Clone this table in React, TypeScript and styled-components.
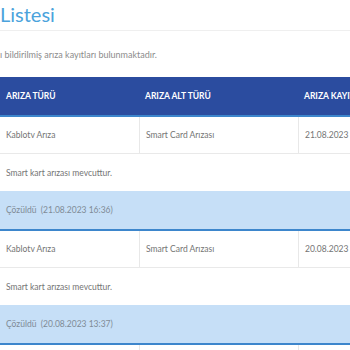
import React from "react";
import styled, { createGlobalStyle } from "styled-components";

const Global = createGlobalStyle`
  html, body { margin: 0; padding: 0; background: #fff; }
  body { font-family: Lato, "Open Sans", sans-serif; overflow: hidden; }
`;

const Page = styled.div`
  width: 350px;
  height: 350px;
  overflow: hidden;
  background: #fff;
`;

const TitleBar = styled.div`
  height: 30px;
  border-bottom: 1px solid #efefef;
  display: flex;
  align-items: center;
`;

const Title = styled.h1`
  margin: -2px 0 0;
  font-size: 20px;
  font-weight: 400;
  color: #4ba3dc;
  line-height: 1;
`;

const Subtitle = styled.p`
  margin: 0;
  height: 46px;
  display: flex;
  align-items: center;
  font-size: 9px;
  color: #8c8c8c;
`;

const Table = styled.div`
  width: 460px;
`;

const Grid = styled.div`
  display: grid;
  grid-template-columns: 139px 159px 1fr;
`;

const Head = styled(Grid)`
  background: #2b4c9f;
  height: 38px;
  border-bottom: 2px solid #3d86cc;
`;

const HeadCell = styled.div`
  display: flex;
  align-items: center;
  padding-left: 6px;
  font-size: 8.5px;
  font-weight: 700;
  color: #fff;
  white-space: nowrap;
`;

const Row = styled(Grid)`
  height: 36px;
  border-bottom: 1px solid #e9e9e9;
`;

const Cell = styled.div<{ $divider?: boolean }>`
  display: flex;
  align-items: center;
  padding-left: 6px;
  font-size: 8.5px;
  color: #747474;
  border-left: ${(p) => (p.$divider ? "1px solid #e8e8e8" : "none")};
`;

const Desc = styled.div`
  height: 37px;
  display: flex;
  align-items: center;
  padding-left: 6px;
  font-size: 8.5px;
  color: #747474;
`;

const Status = styled.div`
  height: 38px;
  display: flex;
  align-items: center;
  padding-left: 6px;
  font-size: 8.5px;
  color: #7f8b96;
  background: #c6dff7;
  border-bottom: 2px solid #3d86cc;
  white-space: pre;
`;

const records = [
  { type: "Kablotv Arıza", sub: "Smart Card Arızası", date: "21.08.2023", desc: "Smart kart arızası mevcuttur.", status: "Çözüldü  (21.08.2023 16:36)" },
  { type: "Kablotv Arıza", sub: "Smart Card Arızası", date: "20.08.2023", desc: "Smart kart arızası mevcuttur.", status: "Çözüldü  (20.08.2023 13:37)" },
];

export default function App() {
  return (
    <Page>
      <Global />
      <TitleBar>
        <Title>Listesi</Title>
      </TitleBar>
      <Subtitle>ı bildirilmiş arıza kayıtları bulunmaktadır.</Subtitle>
      <Table>
        <Head>
          <HeadCell>ARIZA TÜRÜ</HeadCell>
          <HeadCell>ARIZA ALT TÜRÜ</HeadCell>
          <HeadCell>ARIZA KAYIT TARİHİ</HeadCell>
        </Head>
        {records.map((r, i) => (
          <React.Fragment key={i}>
            <Row>
              <Cell>{r.type}</Cell>
              <Cell $divider>{r.sub}</Cell>
              <Cell $divider>{r.date}</Cell>
            </Row>
            <Desc>{r.desc}</Desc>
            <Status>{r.status}</Status>
          </React.Fragment>
        ))}
        <Row>
          <Cell />
          <Cell $divider />
          <Cell $divider />
        </Row>
      </Table>
    </Page>
  );
}
